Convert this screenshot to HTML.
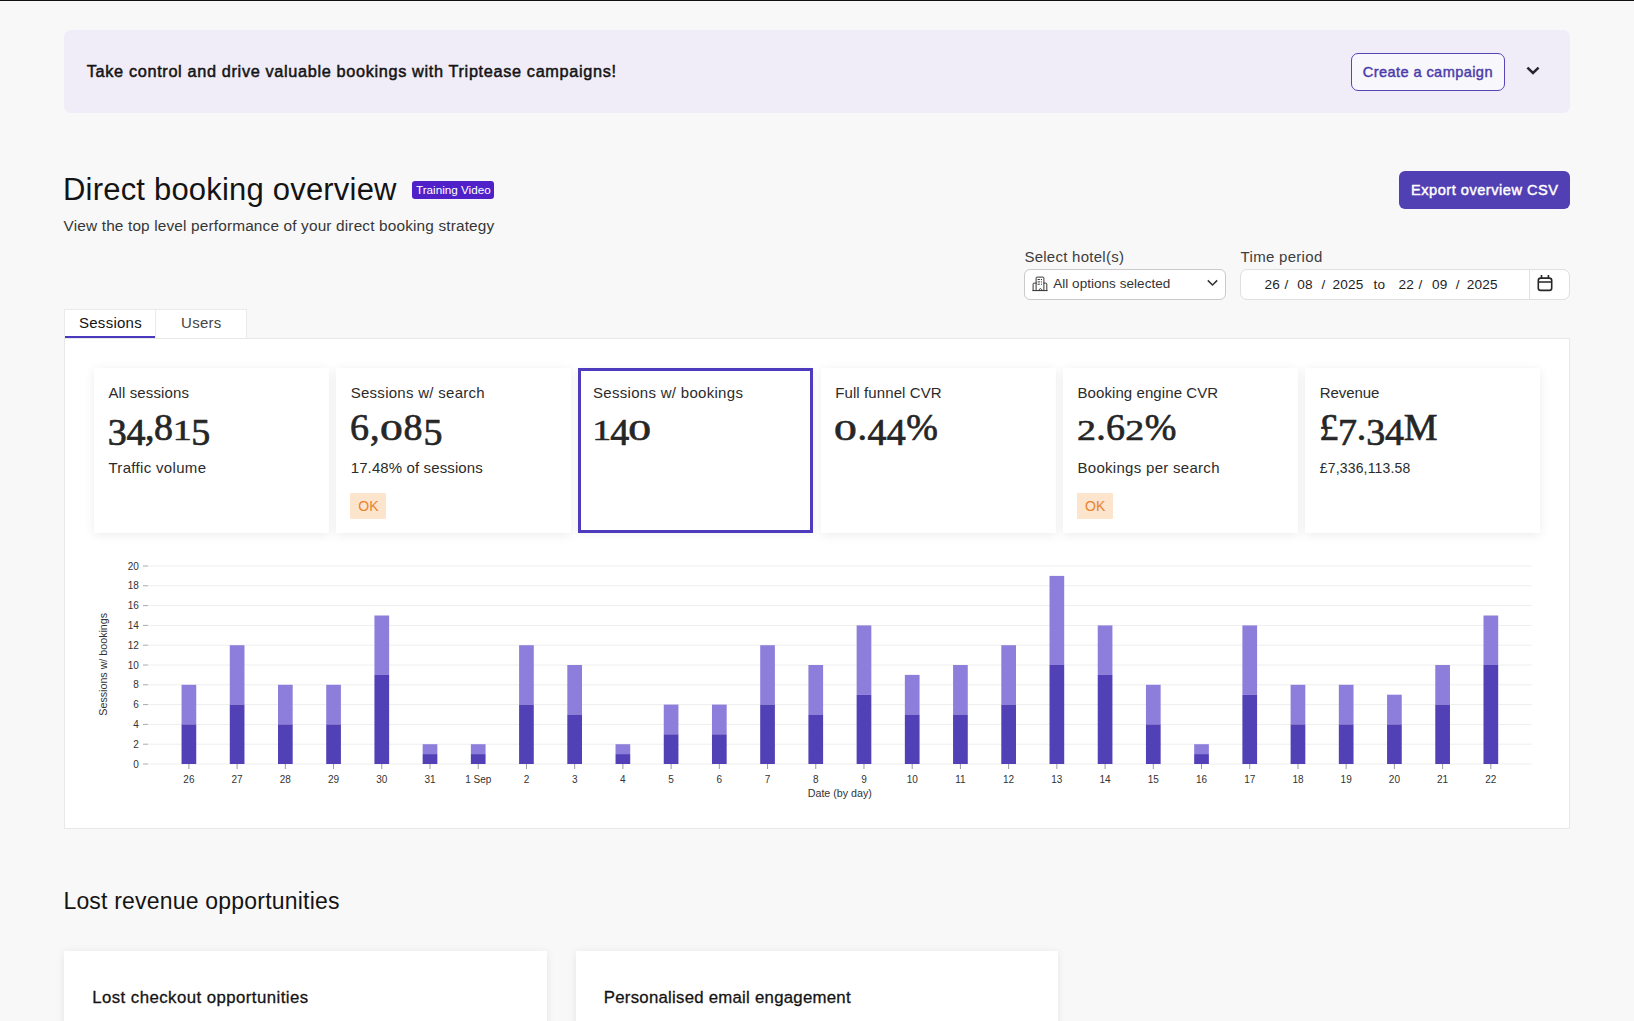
<!DOCTYPE html>
<html><head><meta charset="utf-8">
<style>
*{box-sizing:border-box;margin:0;padding:0}
html,body{width:1634px;height:1021px;overflow:hidden}
body{background:#f8f8f9;font-family:"Liberation Sans",sans-serif;color:#1a1a1a;position:relative}
.abs{position:absolute}
.t{position:absolute;white-space:nowrap;line-height:1}
#topline{left:0;top:0;width:1634px;height:1px;background:#111}
#banner{left:64px;top:30px;width:1506px;height:83px;background:#f0edf8;border-radius:7px}
#cbtn{left:1351px;top:53px;width:154px;height:38px;border:1px solid #5646b8;border-radius:7px;background:#f8f7fb}
#badge{left:412px;top:181px;width:82px;height:18px;background:#5021c8;border-radius:3px}
#export{left:1399px;top:171px;width:171px;height:38px;background:#5140b3;border-radius:6px}
#sel{left:1024px;top:269px;width:202px;height:31px;background:#fff;border:1px solid #c9c9ce;border-radius:6px}
#date{left:1240px;top:268.5px;width:330px;height:31px;background:#fff;border:1px solid #dedee3;border-radius:7px}
#datesep{left:1529px;top:269px;width:1px;height:30px;background:#e2e2e6}
#panel{left:64px;top:338px;width:1506px;height:491px;background:#fff;border:1px solid #e8e8e8}
.tab{position:absolute;top:309px;height:29px;background:#fff;border:1px solid #eaeaea;border-bottom:none}
#tabline{left:65px;top:336px;width:90px;height:2px;background:#4a38be}
.card{position:absolute;top:368px;width:235px;height:165px;background:#fff;box-shadow:0 2px 10px rgba(0,0,0,0.08)}
.card.sel{border:3px solid #4f3bbd;box-shadow:0 1px 6px rgba(0,0,0,0.06)}
.ok{position:absolute;top:493px;width:36px;height:26px;background:#fde4cc;border-radius:1px}
.osz{display:inline-block;transform:scale(1.2,0.77);transform-origin:50% 83.75%;margin:0 1.8px}
.os0{display:inline-block;transform:scaleY(0.77);transform-origin:50% 83.75%}
.osd{display:inline-block;transform:translateY(5px)}
.ct{font-family:"Liberation Sans",sans-serif;font-size:10px;fill:#333}
.lcard{position:absolute;top:951px;height:90px;background:#fff;box-shadow:0 1px 8px rgba(0,0,0,0.08)}
</style></head><body>
<div id="topline" class="abs"></div>
<div id="banner" class="abs"></div>
<div id="cbtn" class="abs"></div>
<svg class="abs" style="left:1525px;top:65px" width="16" height="12" viewBox="0 0 16 12"><path d="M2.4 2.6 L8 8.0 L13.6 2.6" stroke="#28252d" stroke-width="2.5" fill="none" stroke-linecap="butt"/></svg>
<div id="badge" class="abs"></div>
<div id="export" class="abs"></div>
<div id="sel" class="abs"></div>
<svg class="abs" style="left:1032px;top:276px" width="16" height="16" viewBox="0 0 16 16" fill="none" stroke="#2a2a2a" stroke-width="0.95" stroke-linecap="round" stroke-linejoin="round">
<path d="M1.1 14.6 V8.1 Q1.1 7.1 2.1 7.1 H4.1 M4.1 14.6 V2.1 Q4.1 1.1 5.1 1.1 H10.9 Q11.9 1.1 11.9 2.1 V14.6 M11.9 7.1 H13.8 Q14.8 7.1 14.8 8.1 V14.6 M0.9 14.6 H15.1"/>
<path d="M6 3.5 H7.5 M6 5.9 H7.5 M6 8.2 H7.5 M9.3 3.5 H9.6 M9.3 5.9 H9.6 M9.3 8.2 H9.6 M7.1 14.6 V13.6 Q8.45 11.6 9.8 13.6 V14.6"/>
</svg>
<svg class="abs" style="left:1206px;top:278px" width="13" height="10" viewBox="0 0 13 10"><path d="M1.8 2.4 L6.5 7 L11.2 2.4" stroke="#333" stroke-width="1.5" fill="none"/></svg>
<div id="date" class="abs"></div>
<div id="datesep" class="abs"></div>
<svg class="abs" style="left:1536px;top:274px" width="18" height="19" viewBox="0 0 18 19" fill="none" stroke="#262626" stroke-width="1.6">
<rect x="2.3" y="4.15" width="13.4" height="12.25" rx="2.4"/><path d="M2.3 8.06 H15.7 M5.5 1.1 V4.2 M12.4 1.1 V4.2"/>
</svg>
<div id="panel" class="abs"></div>
<div class="tab" style="left:64px;width:92px"></div>
<div class="tab" style="left:155px;width:92px"></div>
<div id="tabline" class="abs"></div>
<div class="card" style="left:93.80px"></div><div class="card" style="left:336.08px"></div><div class="card sel" style="left:578.36px"></div><div class="card" style="left:820.64px"></div><div class="card" style="left:1062.92px"></div><div class="card" style="left:1305.20px"></div>
<div class="ok" style="left:350.28px"></div><div class="ok" style="left:1077.12px"></div>
<svg class="abs" style="left:0;top:0" width="1634" height="1021" viewBox="0 0 1634 1021">
<line x1="149.5" x2="1531.7" y1="764.00" y2="764.00" stroke="#eeeeee" stroke-width="1"/>
<line x1="143" x2="148.3" y1="764.00" y2="764.00" stroke="#aaa" stroke-width="1"/>
<text x="138.8" y="767.60" text-anchor="end" class="ct">0</text>
<line x1="149.5" x2="1531.7" y1="744.20" y2="744.20" stroke="#eeeeee" stroke-width="1"/>
<line x1="143" x2="148.3" y1="744.20" y2="744.20" stroke="#aaa" stroke-width="1"/>
<text x="138.8" y="747.80" text-anchor="end" class="ct">2</text>
<line x1="149.5" x2="1531.7" y1="724.40" y2="724.40" stroke="#eeeeee" stroke-width="1"/>
<line x1="143" x2="148.3" y1="724.40" y2="724.40" stroke="#aaa" stroke-width="1"/>
<text x="138.8" y="728.00" text-anchor="end" class="ct">4</text>
<line x1="149.5" x2="1531.7" y1="704.60" y2="704.60" stroke="#eeeeee" stroke-width="1"/>
<line x1="143" x2="148.3" y1="704.60" y2="704.60" stroke="#aaa" stroke-width="1"/>
<text x="138.8" y="708.20" text-anchor="end" class="ct">6</text>
<line x1="149.5" x2="1531.7" y1="684.80" y2="684.80" stroke="#eeeeee" stroke-width="1"/>
<line x1="143" x2="148.3" y1="684.80" y2="684.80" stroke="#aaa" stroke-width="1"/>
<text x="138.8" y="688.40" text-anchor="end" class="ct">8</text>
<line x1="149.5" x2="1531.7" y1="665.00" y2="665.00" stroke="#eeeeee" stroke-width="1"/>
<line x1="143" x2="148.3" y1="665.00" y2="665.00" stroke="#aaa" stroke-width="1"/>
<text x="138.8" y="668.60" text-anchor="end" class="ct">10</text>
<line x1="149.5" x2="1531.7" y1="645.20" y2="645.20" stroke="#eeeeee" stroke-width="1"/>
<line x1="143" x2="148.3" y1="645.20" y2="645.20" stroke="#aaa" stroke-width="1"/>
<text x="138.8" y="648.80" text-anchor="end" class="ct">12</text>
<line x1="149.5" x2="1531.7" y1="625.40" y2="625.40" stroke="#eeeeee" stroke-width="1"/>
<line x1="143" x2="148.3" y1="625.40" y2="625.40" stroke="#aaa" stroke-width="1"/>
<text x="138.8" y="629.00" text-anchor="end" class="ct">14</text>
<line x1="149.5" x2="1531.7" y1="605.60" y2="605.60" stroke="#eeeeee" stroke-width="1"/>
<line x1="143" x2="148.3" y1="605.60" y2="605.60" stroke="#aaa" stroke-width="1"/>
<text x="138.8" y="609.20" text-anchor="end" class="ct">16</text>
<line x1="149.5" x2="1531.7" y1="585.80" y2="585.80" stroke="#eeeeee" stroke-width="1"/>
<line x1="143" x2="148.3" y1="585.80" y2="585.80" stroke="#aaa" stroke-width="1"/>
<text x="138.8" y="589.40" text-anchor="end" class="ct">18</text>
<line x1="149.5" x2="1531.7" y1="566.00" y2="566.00" stroke="#eeeeee" stroke-width="1"/>
<line x1="143" x2="148.3" y1="566.00" y2="566.00" stroke="#aaa" stroke-width="1"/>
<text x="138.8" y="569.60" text-anchor="end" class="ct">20</text>
<rect x="181.55" y="684.80" width="14.7" height="39.60" fill="#8e7edc"/>
<rect x="181.55" y="724.40" width="14.7" height="39.60" fill="#5140b6"/>
<line x1="188.90" x2="188.90" y1="764" y2="769" stroke="#999" stroke-width="1"/>
<text x="188.90" y="783" text-anchor="middle" class="ct">26</text>
<rect x="229.77" y="645.20" width="14.7" height="59.40" fill="#8e7edc"/>
<rect x="229.77" y="704.60" width="14.7" height="59.40" fill="#5140b6"/>
<line x1="237.12" x2="237.12" y1="764" y2="769" stroke="#999" stroke-width="1"/>
<text x="237.12" y="783" text-anchor="middle" class="ct">27</text>
<rect x="277.99" y="684.80" width="14.7" height="39.60" fill="#8e7edc"/>
<rect x="277.99" y="724.40" width="14.7" height="39.60" fill="#5140b6"/>
<line x1="285.34" x2="285.34" y1="764" y2="769" stroke="#999" stroke-width="1"/>
<text x="285.34" y="783" text-anchor="middle" class="ct">28</text>
<rect x="326.21" y="684.80" width="14.7" height="39.60" fill="#8e7edc"/>
<rect x="326.21" y="724.40" width="14.7" height="39.60" fill="#5140b6"/>
<line x1="333.56" x2="333.56" y1="764" y2="769" stroke="#999" stroke-width="1"/>
<text x="333.56" y="783" text-anchor="middle" class="ct">29</text>
<rect x="374.43" y="615.50" width="14.7" height="59.40" fill="#8e7edc"/>
<rect x="374.43" y="674.90" width="14.7" height="89.10" fill="#5140b6"/>
<line x1="381.78" x2="381.78" y1="764" y2="769" stroke="#999" stroke-width="1"/>
<text x="381.78" y="783" text-anchor="middle" class="ct">30</text>
<rect x="422.65" y="744.20" width="14.7" height="9.90" fill="#8e7edc"/>
<rect x="422.65" y="754.10" width="14.7" height="9.90" fill="#5140b6"/>
<line x1="430.00" x2="430.00" y1="764" y2="769" stroke="#999" stroke-width="1"/>
<text x="430.00" y="783" text-anchor="middle" class="ct">31</text>
<rect x="470.87" y="744.20" width="14.7" height="9.90" fill="#8e7edc"/>
<rect x="470.87" y="754.10" width="14.7" height="9.90" fill="#5140b6"/>
<line x1="478.22" x2="478.22" y1="764" y2="769" stroke="#999" stroke-width="1"/>
<text x="478.22" y="783" text-anchor="middle" class="ct">1 Sep</text>
<rect x="519.09" y="645.20" width="14.7" height="59.40" fill="#8e7edc"/>
<rect x="519.09" y="704.60" width="14.7" height="59.40" fill="#5140b6"/>
<line x1="526.44" x2="526.44" y1="764" y2="769" stroke="#999" stroke-width="1"/>
<text x="526.44" y="783" text-anchor="middle" class="ct">2</text>
<rect x="567.31" y="665.00" width="14.7" height="49.50" fill="#8e7edc"/>
<rect x="567.31" y="714.50" width="14.7" height="49.50" fill="#5140b6"/>
<line x1="574.66" x2="574.66" y1="764" y2="769" stroke="#999" stroke-width="1"/>
<text x="574.66" y="783" text-anchor="middle" class="ct">3</text>
<rect x="615.53" y="744.20" width="14.7" height="9.90" fill="#8e7edc"/>
<rect x="615.53" y="754.10" width="14.7" height="9.90" fill="#5140b6"/>
<line x1="622.88" x2="622.88" y1="764" y2="769" stroke="#999" stroke-width="1"/>
<text x="622.88" y="783" text-anchor="middle" class="ct">4</text>
<rect x="663.75" y="704.60" width="14.7" height="29.70" fill="#8e7edc"/>
<rect x="663.75" y="734.30" width="14.7" height="29.70" fill="#5140b6"/>
<line x1="671.10" x2="671.10" y1="764" y2="769" stroke="#999" stroke-width="1"/>
<text x="671.10" y="783" text-anchor="middle" class="ct">5</text>
<rect x="711.97" y="704.60" width="14.7" height="29.70" fill="#8e7edc"/>
<rect x="711.97" y="734.30" width="14.7" height="29.70" fill="#5140b6"/>
<line x1="719.32" x2="719.32" y1="764" y2="769" stroke="#999" stroke-width="1"/>
<text x="719.32" y="783" text-anchor="middle" class="ct">6</text>
<rect x="760.19" y="645.20" width="14.7" height="59.40" fill="#8e7edc"/>
<rect x="760.19" y="704.60" width="14.7" height="59.40" fill="#5140b6"/>
<line x1="767.54" x2="767.54" y1="764" y2="769" stroke="#999" stroke-width="1"/>
<text x="767.54" y="783" text-anchor="middle" class="ct">7</text>
<rect x="808.41" y="665.00" width="14.7" height="49.50" fill="#8e7edc"/>
<rect x="808.41" y="714.50" width="14.7" height="49.50" fill="#5140b6"/>
<line x1="815.76" x2="815.76" y1="764" y2="769" stroke="#999" stroke-width="1"/>
<text x="815.76" y="783" text-anchor="middle" class="ct">8</text>
<rect x="856.63" y="625.40" width="14.7" height="69.30" fill="#8e7edc"/>
<rect x="856.63" y="694.70" width="14.7" height="69.30" fill="#5140b6"/>
<line x1="863.98" x2="863.98" y1="764" y2="769" stroke="#999" stroke-width="1"/>
<text x="863.98" y="783" text-anchor="middle" class="ct">9</text>
<rect x="904.85" y="674.90" width="14.7" height="39.60" fill="#8e7edc"/>
<rect x="904.85" y="714.50" width="14.7" height="49.50" fill="#5140b6"/>
<line x1="912.20" x2="912.20" y1="764" y2="769" stroke="#999" stroke-width="1"/>
<text x="912.20" y="783" text-anchor="middle" class="ct">10</text>
<rect x="953.07" y="665.00" width="14.7" height="49.50" fill="#8e7edc"/>
<rect x="953.07" y="714.50" width="14.7" height="49.50" fill="#5140b6"/>
<line x1="960.42" x2="960.42" y1="764" y2="769" stroke="#999" stroke-width="1"/>
<text x="960.42" y="783" text-anchor="middle" class="ct">11</text>
<rect x="1001.29" y="645.20" width="14.7" height="59.40" fill="#8e7edc"/>
<rect x="1001.29" y="704.60" width="14.7" height="59.40" fill="#5140b6"/>
<line x1="1008.64" x2="1008.64" y1="764" y2="769" stroke="#999" stroke-width="1"/>
<text x="1008.64" y="783" text-anchor="middle" class="ct">12</text>
<rect x="1049.51" y="575.90" width="14.7" height="89.10" fill="#8e7edc"/>
<rect x="1049.51" y="665.00" width="14.7" height="99.00" fill="#5140b6"/>
<line x1="1056.86" x2="1056.86" y1="764" y2="769" stroke="#999" stroke-width="1"/>
<text x="1056.86" y="783" text-anchor="middle" class="ct">13</text>
<rect x="1097.73" y="625.40" width="14.7" height="49.50" fill="#8e7edc"/>
<rect x="1097.73" y="674.90" width="14.7" height="89.10" fill="#5140b6"/>
<line x1="1105.08" x2="1105.08" y1="764" y2="769" stroke="#999" stroke-width="1"/>
<text x="1105.08" y="783" text-anchor="middle" class="ct">14</text>
<rect x="1145.95" y="684.80" width="14.7" height="39.60" fill="#8e7edc"/>
<rect x="1145.95" y="724.40" width="14.7" height="39.60" fill="#5140b6"/>
<line x1="1153.30" x2="1153.30" y1="764" y2="769" stroke="#999" stroke-width="1"/>
<text x="1153.30" y="783" text-anchor="middle" class="ct">15</text>
<rect x="1194.17" y="744.20" width="14.7" height="9.90" fill="#8e7edc"/>
<rect x="1194.17" y="754.10" width="14.7" height="9.90" fill="#5140b6"/>
<line x1="1201.52" x2="1201.52" y1="764" y2="769" stroke="#999" stroke-width="1"/>
<text x="1201.52" y="783" text-anchor="middle" class="ct">16</text>
<rect x="1242.39" y="625.40" width="14.7" height="69.30" fill="#8e7edc"/>
<rect x="1242.39" y="694.70" width="14.7" height="69.30" fill="#5140b6"/>
<line x1="1249.74" x2="1249.74" y1="764" y2="769" stroke="#999" stroke-width="1"/>
<text x="1249.74" y="783" text-anchor="middle" class="ct">17</text>
<rect x="1290.61" y="684.80" width="14.7" height="39.60" fill="#8e7edc"/>
<rect x="1290.61" y="724.40" width="14.7" height="39.60" fill="#5140b6"/>
<line x1="1297.96" x2="1297.96" y1="764" y2="769" stroke="#999" stroke-width="1"/>
<text x="1297.96" y="783" text-anchor="middle" class="ct">18</text>
<rect x="1338.83" y="684.80" width="14.7" height="39.60" fill="#8e7edc"/>
<rect x="1338.83" y="724.40" width="14.7" height="39.60" fill="#5140b6"/>
<line x1="1346.18" x2="1346.18" y1="764" y2="769" stroke="#999" stroke-width="1"/>
<text x="1346.18" y="783" text-anchor="middle" class="ct">19</text>
<rect x="1387.05" y="694.70" width="14.7" height="29.70" fill="#8e7edc"/>
<rect x="1387.05" y="724.40" width="14.7" height="39.60" fill="#5140b6"/>
<line x1="1394.40" x2="1394.40" y1="764" y2="769" stroke="#999" stroke-width="1"/>
<text x="1394.40" y="783" text-anchor="middle" class="ct">20</text>
<rect x="1435.27" y="665.00" width="14.7" height="39.60" fill="#8e7edc"/>
<rect x="1435.27" y="704.60" width="14.7" height="59.40" fill="#5140b6"/>
<line x1="1442.62" x2="1442.62" y1="764" y2="769" stroke="#999" stroke-width="1"/>
<text x="1442.62" y="783" text-anchor="middle" class="ct">21</text>
<rect x="1483.49" y="615.50" width="14.7" height="49.50" fill="#8e7edc"/>
<rect x="1483.49" y="665.00" width="14.7" height="99.00" fill="#5140b6"/>
<line x1="1490.84" x2="1490.84" y1="764" y2="769" stroke="#999" stroke-width="1"/>
<text x="1490.84" y="783" text-anchor="middle" class="ct">22</text>
<text x="839.8" y="797" text-anchor="middle" class="ct" style="font-size:10.7px">Date (by day)</text>
<text transform="translate(106.8,664.3) rotate(-90)" text-anchor="middle" class="ct" style="font-size:10.7px">Sessions w/ bookings</text>
</svg>
<div class="lcard" style="left:64px;width:483px"></div>
<div class="lcard" style="left:576px;width:482px"></div>
<div class="t" style="left:86.80px;top:63.10px;font-size:16.3px;font-weight:400;color:#141414;letter-spacing:0.65px;font-family:'Liberation Sans',sans-serif;-webkit-text-stroke:0.5px #141414;">Take control and drive valuable bookings with Triptease campaigns!</div><div class="t" style="left:1362.80px;top:64.64px;font-size:14.6px;font-weight:400;color:#4c3cab;letter-spacing:0.4px;font-family:'Liberation Sans',sans-serif;-webkit-text-stroke:0.45px #4c3cab;">Create a campaign</div><div class="t" style="left:63.00px;top:174.06px;font-size:31px;font-weight:400;color:#141414;letter-spacing:0.2px;font-family:'Liberation Sans',sans-serif;">Direct booking overview</div><div class="t" style="left:416.00px;top:184.10px;font-size:11.7px;font-weight:400;color:#ffffff;letter-spacing:0px;font-family:'Liberation Sans',sans-serif;">Training Video</div><div class="t" style="left:63.60px;top:218.16px;font-size:15.4px;font-weight:400;color:#363636;letter-spacing:0.15px;font-family:'Liberation Sans',sans-serif;">View the top level performance of your direct booking strategy</div><div class="t" style="left:1411.00px;top:182.64px;font-size:14.6px;font-weight:400;color:#ffffff;letter-spacing:0.51px;font-family:'Liberation Sans',sans-serif;-webkit-text-stroke:0.45px #ffffff;">Export overview CSV</div><div class="t" style="left:1024.40px;top:249.20px;font-size:15px;font-weight:400;color:#3d3d3d;letter-spacing:0.26px;font-family:'Liberation Sans',sans-serif;">Select hotel(s)</div><div class="t" style="left:1240.60px;top:249.20px;font-size:15px;font-weight:400;color:#3d3d3d;letter-spacing:0.3px;font-family:'Liberation Sans',sans-serif;">Time period</div><div class="t" style="left:1053.20px;top:276.87px;font-size:13.5px;font-weight:400;color:#333333;letter-spacing:0.04px;font-family:'Liberation Sans',sans-serif;">All options selected</div><div class="t" style="left:1264.60px;top:277.89px;font-size:13.6px;font-weight:400;color:#1e1e1e;letter-spacing:0.2px;font-family:'Liberation Sans',sans-serif;">26</div><div class="t" style="left:1284.60px;top:277.89px;font-size:13.6px;font-weight:400;color:#1e1e1e;letter-spacing:0.2px;font-family:'Liberation Sans',sans-serif;">/</div><div class="t" style="left:1297.20px;top:277.89px;font-size:13.6px;font-weight:400;color:#1e1e1e;letter-spacing:0.2px;font-family:'Liberation Sans',sans-serif;">08</div><div class="t" style="left:1321.60px;top:277.89px;font-size:13.6px;font-weight:400;color:#1e1e1e;letter-spacing:0.2px;font-family:'Liberation Sans',sans-serif;">/</div><div class="t" style="left:1332.60px;top:277.89px;font-size:13.6px;font-weight:400;color:#1e1e1e;letter-spacing:0.2px;font-family:'Liberation Sans',sans-serif;">2025</div><div class="t" style="left:1373.60px;top:277.89px;font-size:13.6px;font-weight:400;color:#1e1e1e;letter-spacing:0.2px;font-family:'Liberation Sans',sans-serif;">to</div><div class="t" style="left:1398.60px;top:277.89px;font-size:13.6px;font-weight:400;color:#1e1e1e;letter-spacing:0.2px;font-family:'Liberation Sans',sans-serif;">22</div><div class="t" style="left:1418.60px;top:277.89px;font-size:13.6px;font-weight:400;color:#1e1e1e;letter-spacing:0.2px;font-family:'Liberation Sans',sans-serif;">/</div><div class="t" style="left:1432.00px;top:277.89px;font-size:13.6px;font-weight:400;color:#1e1e1e;letter-spacing:0.2px;font-family:'Liberation Sans',sans-serif;">09</div><div class="t" style="left:1455.80px;top:277.89px;font-size:13.6px;font-weight:400;color:#1e1e1e;letter-spacing:0.2px;font-family:'Liberation Sans',sans-serif;">/</div><div class="t" style="left:1466.80px;top:277.89px;font-size:13.6px;font-weight:400;color:#1e1e1e;letter-spacing:0.2px;font-family:'Liberation Sans',sans-serif;">2025</div><div class="t" style="left:79.00px;top:315.00px;font-size:15px;font-weight:400;color:#141414;letter-spacing:0.26px;font-family:'Liberation Sans',sans-serif;">Sessions</div><div class="t" style="left:181.00px;top:315.00px;font-size:15px;font-weight:400;color:#444444;letter-spacing:0.3px;font-family:'Liberation Sans',sans-serif;">Users</div><div class="t" style="left:108.40px;top:385.10px;font-size:15px;font-weight:400;color:#2b2b2b;letter-spacing:0.12px;font-family:'Liberation Sans',sans-serif;">All sessions</div><div class="t" style="left:107.80px;top:408.18px;font-size:38px;font-weight:400;color:#262626;letter-spacing:-0.4px;font-family:'Liberation Serif',serif;-webkit-text-stroke:0.7px #262626;"><span class="osd">3</span><span class="osd">4</span>,8<span class="os0">1</span><span class="osd">5</span></div><div class="t" style="left:108.40px;top:460.10px;font-size:15px;font-weight:400;color:#2b2b2b;letter-spacing:0.33px;font-family:'Liberation Sans',sans-serif;">Traffic volume</div><div class="t" style="left:350.68px;top:385.10px;font-size:15px;font-weight:400;color:#2b2b2b;letter-spacing:0.28px;font-family:'Liberation Sans',sans-serif;">Sessions w/ search</div><div class="t" style="left:350.08px;top:408.18px;font-size:38px;font-weight:400;color:#262626;letter-spacing:0.8px;font-family:'Liberation Serif',serif;-webkit-text-stroke:0.7px #262626;">6,<span class="osz">0</span>8<span class="osd">5</span></div><div class="t" style="left:350.68px;top:460.10px;font-size:15px;font-weight:400;color:#2b2b2b;letter-spacing:0.12px;font-family:'Liberation Sans',sans-serif;">17.48% of sessions</div><div class="t" style="left:592.96px;top:385.10px;font-size:15px;font-weight:400;color:#2b2b2b;letter-spacing:0.3px;font-family:'Liberation Sans',sans-serif;">Sessions w/ bookings</div><div class="t" style="left:592.36px;top:408.18px;font-size:38px;font-weight:400;color:#262626;letter-spacing:-1.2px;font-family:'Liberation Serif',serif;-webkit-text-stroke:0.7px #262626;"><span class="os0">1</span><span class="osd">4</span><span class="osz">0</span></div><div class="t" style="left:835.24px;top:385.10px;font-size:15px;font-weight:400;color:#2b2b2b;letter-spacing:0.1px;font-family:'Liberation Sans',sans-serif;">Full funnel CVR</div><div class="t" style="left:834.64px;top:408.18px;font-size:38px;font-weight:400;color:#262626;letter-spacing:0.35px;font-family:'Liberation Serif',serif;-webkit-text-stroke:0.7px #262626;"><span class="osz">0</span>.<span class="osd">4</span><span class="osd">4</span>%</div><div class="t" style="left:1077.52px;top:385.10px;font-size:15px;font-weight:400;color:#2b2b2b;letter-spacing:0.08px;font-family:'Liberation Sans',sans-serif;">Booking engine CVR</div><div class="t" style="left:1076.92px;top:408.18px;font-size:38px;font-weight:400;color:#262626;letter-spacing:0.3px;font-family:'Liberation Serif',serif;-webkit-text-stroke:0.7px #262626;"><span class="os0">2</span>.6<span class="os0">2</span>%</div><div class="t" style="left:1077.52px;top:460.10px;font-size:15px;font-weight:400;color:#2b2b2b;letter-spacing:0.29px;font-family:'Liberation Sans',sans-serif;">Bookings per search</div><div class="t" style="left:1319.80px;top:385.10px;font-size:15px;font-weight:400;color:#2b2b2b;letter-spacing:-0.1px;font-family:'Liberation Sans',sans-serif;">Revenue</div><div class="t" style="left:1319.20px;top:408.18px;font-size:38px;font-weight:400;color:#262626;letter-spacing:-0.2px;font-family:'Liberation Serif',serif;-webkit-text-stroke:0.7px #262626;">£<span class="osd">7</span>.<span class="osd">3</span><span class="osd">4</span>M</div><div class="t" style="left:1319.80px;top:460.75px;font-size:14px;font-weight:400;color:#2b2b2b;letter-spacing:0.16px;font-family:'Liberation Sans',sans-serif;">£7,336,113.58</div><div class="t" style="left:63.40px;top:889.53px;font-size:23px;font-weight:400;color:#141414;letter-spacing:0.2px;font-family:'Liberation Sans',sans-serif;">Lost revenue opportunities</div><div class="t" style="left:92.20px;top:990.08px;font-size:16.8px;font-weight:400;color:#141414;letter-spacing:0.45px;font-family:'Liberation Sans',sans-serif;-webkit-text-stroke:0.3px #141414;">Lost checkout opportunities</div><div class="t" style="left:603.80px;top:990.08px;font-size:16.8px;font-weight:400;color:#141414;letter-spacing:0.25px;font-family:'Liberation Sans',sans-serif;-webkit-text-stroke:0.3px #141414;">Personalised email engagement</div><div class="t" style="left:358.28px;top:499.35px;font-size:14px;font-weight:400;color:#e8832f;letter-spacing:0px;font-family:'Liberation Sans',sans-serif;">OK</div><div class="t" style="left:1085.12px;top:499.35px;font-size:14px;font-weight:400;color:#e8832f;letter-spacing:0px;font-family:'Liberation Sans',sans-serif;">OK</div>
</body></html>
